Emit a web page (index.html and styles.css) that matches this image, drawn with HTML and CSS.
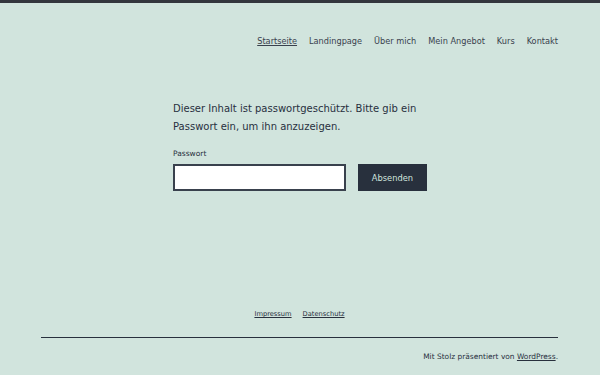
FILE: index.html
```html
<!DOCTYPE html>
<html lang="de">
<head>
  <meta charset="UTF-8">
  <meta name="viewport" content="width=device-width, initial-scale=1.0">
  <title>Geschützt</title>
  <link rel="stylesheet" href="styles.css">
</head>
<body>
  <!-- Kopfbereich -->
  <header class="site-header">
    <nav class="primary-nav">
      <a href="#" class="current">Startseite</a>
      <a href="#">Landingpage</a>
      <a href="#">Über mich</a>
      <a href="#">Mein Angebot</a>
      <a href="#">Kurs</a>
      <a href="#">Kontakt</a>
    </nav>
  </header>

  <!-- Passwortformular -->
  <main class="site-main">
    <form class="post-password-form">
      <p class="intro">Dieser Inhalt ist passwortgeschützt. Bitte gib ein Passwort ein, um ihn anzuzeigen.</p>
      <label for="pwbox">Passwort</label>
      <div class="form-row">
        <input type="password" id="pwbox" name="post_password">
        <button type="submit">Absenden</button>
      </div>
    </form>
  </main>

  <!-- Fußbereich -->
  <footer class="site-footer">
    <nav class="footer-nav">
      <a href="#">Impressum</a>
      <a href="#">Datenschutz</a>
    </nav>
    <div class="site-info">
      <p>Mit Stolz präsentiert von <a href="#">WordPress</a>.</p>
    </div>
  </footer>
</body>
</html>
```

FILE: styles.css
```css
/* Grundlayout */
body {
  margin: 0;
  background: #d1e4dd;
  border-top: 3px solid #33363d;
  font-family: 'DejaVu Sans', sans-serif;
  color: #28303d;
  height: 372px;
  display: flex;
  flex-direction: column;
}

a {
  color: #28303d;
}

/* Kopfbereich */
.site-header {
  padding: 33px 42px 0 0;
  display: flex;
  justify-content: flex-end;
}

.primary-nav {
  display: flex;
  gap: 12px;
  font-size: 8.2px;
}

.primary-nav a {
  text-decoration: none;
  color: #39414d;
}

.primary-nav a.current {
  text-decoration: underline;
}

/* Inhalt */
.site-main {
  flex: 1;
  padding-top: 54px;
}

.post-password-form {
  width: 260px;
  margin-left: 173px;
}

.intro {
  margin: 0;
  font-size: 10px;
  line-height: 18px;
}

label {
  display: block;
  margin-top: 13px;
  font-size: 7.5px;
  color: #28303d;
}

.form-row {
  display: flex;
  gap: 12px;
  margin-top: 6px;
}

input {
  box-sizing: border-box;
  width: 173px;
  height: 27px;
  margin: 0;
  border: 2px solid #39414d;
  background: #fff;
}

button {
  box-sizing: border-box;
  width: 69px;
  height: 27px;
  border: 0;
  background: #28303d;
  color: #d1e4dd;
  font-family: 'DejaVu Sans', sans-serif;
  font-size: 8.3px;
}

/* Fußbereich */
.site-footer {
  margin: 0 42px 0 41px;
}

.footer-nav {
  display: flex;
  justify-content: center;
  gap: 11px;
  font-size: 6.7px;
  padding-bottom: 19px;
  border-bottom: 1px solid #28303d;
}

.site-info {
  text-align: right;
  font-size: 7.45px;
  padding: 14px 0 14px;
}

.site-info p {
  margin: 0;
}
```
